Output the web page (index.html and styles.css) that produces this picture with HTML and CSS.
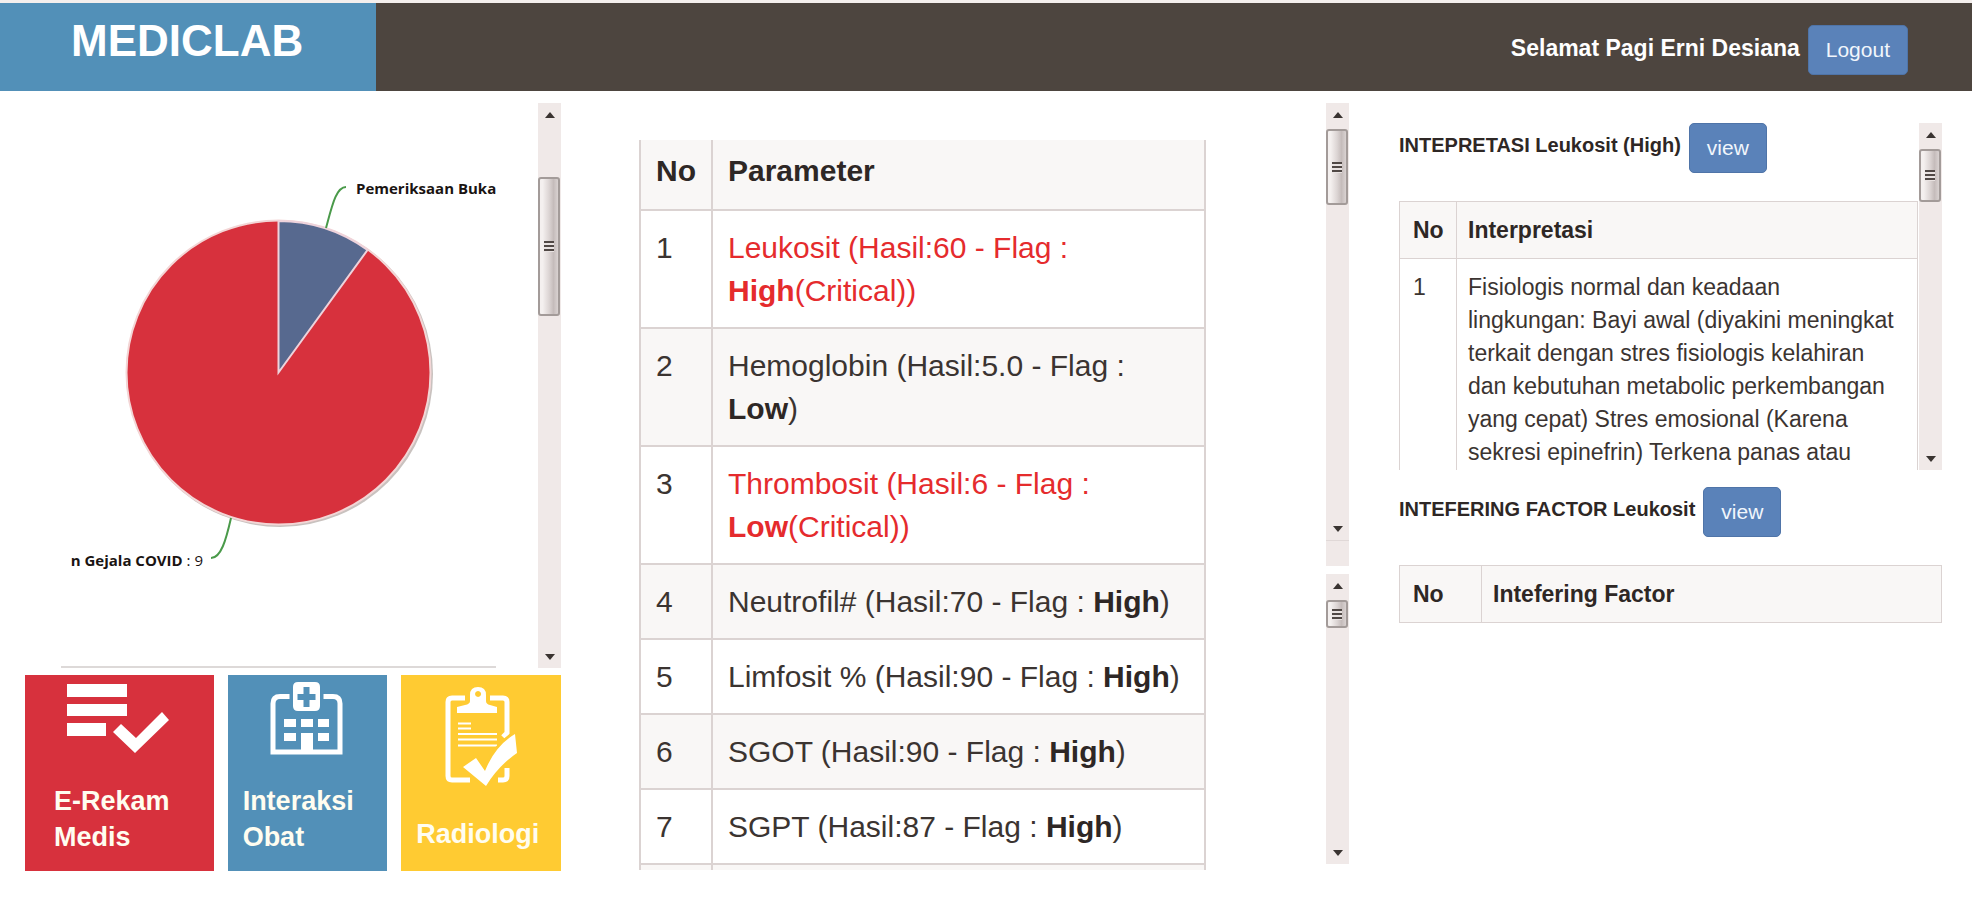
FILE: index.html
```
<!DOCTYPE html>
<html lang="id">
<head>
<meta charset="utf-8">
<title>MEDICLAB</title>
<link rel="stylesheet" href="styles.css">
</head>
<body>
<header class="topbar">
  <h1 class="brand">MEDICLAB</h1>
  <div class="account"><span>Selamat Pagi Erni Desiana</span><button class="btn" type="button">Logout</button></div>
</header>
<main class="page">
  <section class="col-left">
    <div class="chart-panel">
      <div class="chart-view">
        <svg class="chart" width="435" height="564" viewBox="61 103 435 564" role="img" aria-label="Pemeriksaan">
          <circle cx="280" cy="374" r="153" fill="#c9c2bf"/>
          <circle cx="278.500" cy="372.500" r="152" fill="#d7313d" stroke="#f3d6d6" stroke-width="2"/>
          <path d="M278.500 372.500V221A151.500 151.500 0 0 1 367.500 250Z" fill="#57698f" stroke="#eed3dc" stroke-width="2"/>
          <path d="M326 228C332 206 336 187 346 187" class="connector"/>
          <path d="M231 518C226 540 221 558 211 558" class="connector"/>
          <text x="356" y="194" class="chart-label">Pemeriksaan Buka</text>
          <text x="203" y="566" text-anchor="end" class="chart-label">n Gejala COVID<tspan class="chart-value"> : 9</tspan></text>
        </svg>
      </div>
      <div class="scrollbar">
        <svg class="arrow" viewBox="0 0 23 26"><path d="M7 15 12 9l5 6z"/></svg>
        <div class="thumb thumb-chart"><i></i></div>
        <svg class="arrow down" viewBox="0 0 23 26"><path d="M7 12h10l-5 6z"/></svg>
      </div>
    </div>
    <nav class="tiles">
      <a class="tile tile-red" href="#">
        <svg class="tile-icon" width="104" height="100" viewBox="68 680 104 100"><path d="M68 684h60v13H68zM68 704h60v12H68zM68 723h39v13H68zM114 732l8-8 15 14 26-26 7 8-34 33z"/></svg>
        <span>E-Rekam Medis</span>
      </a>
      <a class="tile tile-blue" href="#">
        <svg class="tile-icon" width="76" height="100" viewBox="270 680 76 100"><path d="M299 682h17q5 0 5 5v19q0 5-5 5h-17q-5 0-5-5v-19q0-5 5-5z"/><path d="M304.500 687h6v7h6v6h-6v7h-6v-7h-6v-6h6z" fill="#5290b8"/><path d="M290.500 696.500H281q-7 0-7 7V752h67v-48.500q0-7-7-7h-9.500" fill="none" stroke="#fff" stroke-width="5"/><path d="M285 719h12v8h-12zM302 719h12v8h-12zM319 719h11v8h-11zM285 733h12v8h-12zM319 733h11v8h-11zM302 733h12v19h-12z"/></svg>
        <span>Interaksi Obat</span>
      </a>
      <a class="tile tile-yellow" href="#">
        <svg class="tile-icon" width="76" height="108" viewBox="443 680 76 108"><path d="M465 698h-13q-4 0-4 4v74q0 4 4 4h18M490 698h13q4 0 4 4v31l-4 4M507 768v8q0 4-4 4h-5" fill="none" stroke="#fff" stroke-width="5"/><path fill-rule="evenodd" d="M470 701v-6q0-8 8-8t8 8v6q0 3 4 4l7 2v6h-40v-6l8-2q5-1 5-4zM478 691a3 3 0 1 0 .1 0z"/><path d="M458 723.500h13M458 728.500h13M458 734h39M458 739.500h39M458 745.500h39" stroke="#fff" stroke-width="2"/><path d="M463 767l13-9 9 13q10-25 30-37l2 19q-19 13-31 33z" stroke="#ffcb32" stroke-width="6" paint-order="stroke"/></svg>
        <span>Radiologi</span>
      </a>
    </nav>
  </section>
  <section class="col-mid">
    <div class="results">
      <table class="grid grid-large">
        <thead><tr><th class="num">No</th><th>Parameter</th></tr></thead>
        <tbody>
          <tr class="critical"><td>1</td><td>Leukosit (Hasil:60 - Flag :<br><b>High</b>(Critical))</td></tr>
          <tr><td>2</td><td>Hemoglobin (Hasil:5.0 - Flag :<br><b>Low</b>)</td></tr>
          <tr class="critical"><td>3</td><td>Thrombosit (Hasil:6 - Flag :<br><b>Low</b>(Critical))</td></tr>
          <tr><td>4</td><td>Neutrofil# (Hasil:70 - Flag : <b>High</b>)</td></tr>
          <tr><td>5</td><td>Limfosit % (Hasil:90 - Flag : <b>High</b>)</td></tr>
          <tr><td>6</td><td>SGOT (Hasil:90 - Flag : <b>High</b>)</td></tr>
          <tr><td>7</td><td>SGPT (Hasil:87 - Flag : <b>High</b>)</td></tr>
          <tr class="cut"><td></td><td></td></tr>
        </tbody>
      </table>
    </div>
    <div class="mid-bars">
      <div class="scrollbar bar-upper">
        <svg class="arrow" viewBox="0 0 23 26"><path d="M7 15 12 9l5 6z"/></svg>
        <div class="thumb thumb-upper"><i></i></div>
        <svg class="arrow down" viewBox="0 0 23 26"><path d="M7 12h10l-5 6z"/></svg>
        <div class="corner"></div>
      </div>
      <div class="scrollbar bar-lower">
        <svg class="arrow" viewBox="0 0 23 26"><path d="M7 15 12 9l5 6z"/></svg>
        <div class="thumb thumb-lower"><i></i></div>
        <svg class="arrow down" viewBox="0 0 23 26"><path d="M7 12h10l-5 6z"/></svg>
      </div>
    </div>
  </section>
  <section class="col-right">
    <div class="interp">
      <div class="interp-view">
        <div class="section-head"><h2>INTEPRETASI Leukosit (High)</h2><button class="btn" type="button">view</button></div>
        <table class="grid">
          <thead><tr><th class="num-narrow">No</th><th>Interpretasi</th></tr></thead>
          <tbody><tr><td>1</td><td>Fisiologis normal dan keadaan<br>lingkungan: Bayi awal (diyakini meningkat<br>terkait dengan stres fisiologis kelahiran<br>dan kebutuhan metabolic perkembangan<br>yang cepat) Stres emosional (Karena<br>sekresi epinefrin) Terkena panas atau</td></tr></tbody>
        </table>
      </div>
      <div class="scrollbar">
        <svg class="arrow" viewBox="0 0 23 26"><path d="M7 15 12 9l5 6z"/></svg>
        <div class="thumb thumb-interp"><i></i></div>
        <svg class="arrow down" viewBox="0 0 23 26"><path d="M7 12h10l-5 6z"/></svg>
      </div>
    </div>
    <div class="section-head"><h2>INTEFERING FACTOR Leukosit</h2><button class="btn" type="button">view</button></div>
    <table class="grid">
      <thead><tr><th class="num-wide">No</th><th>Intefering Factor</th></tr></thead>
    </table>
  </section>
</main>
</body>
</html>
```
FILE: styles.css
```
* { box-sizing: border-box; }
body {
  margin: 0;
  background: #fff;
  color: #3b3431;
  font: 23px/33px "Liberation Sans", Arial, sans-serif;
}
.topbar {
  display: flex;
  justify-content: space-between;
  height: 91px;
  border-top: 3px solid #f4efed;
  background: #4d453f;
  color: #fff;
}
.brand {
  width: 376px;
  margin: 0;
  padding: 13px 0 0 71px;
  background: #5290b8;
  font-size: 44px;
  line-height: 50px;
}
.account {
  display: flex;
  align-items: center;
  gap: 8px;
  padding: 6px 64px 0 0;
  font-weight: bold;
}
.account span { padding-bottom: 4px; }
.btn {
  height: 50px;
  padding: 0 17px;
  border: 1px solid #4f74a8;
  border-radius: 5px;
  background: #5a82b9;
  color: #f1f6fc;
  font: 21px/30px "Liberation Sans", Arial, sans-serif;
}
.page {
  display: flex;
  align-items: flex-start;
  padding: 12px 30px 26px 25px;
}
.col-left { flex: 536 1 0; min-width: 0; }
.col-mid { flex: 710 1 0; min-width: 0; display: flex; margin-left: 78px; }
.col-right { flex: 543 1 0; min-width: 0; margin-left: 50px; padding-top: 20px; }

.chart-panel { display: flex; justify-content: space-between; height: 565px; padding-left: 36px; }
.chart-view { width: 435px; border-bottom: 2px solid #ddd9d8; }
.chart { display: block; }
.connector { fill: none; stroke: #4a9a4a; stroke-width: 2; }
.chart-label { fill: #1a1412; font: bold 15px "Open Sans", sans-serif; }
.chart-value { font-weight: normal; }

.scrollbar {
  display: flex;
  flex-direction: column;
  flex: none;
  width: 23px;
  background: #f0e9e8;
}
.arrow { display: block; width: 23px; height: 26px; fill: #3a3431; }
.down { margin-top: auto; }
.thumb {
  display: flex;
  align-items: center;
  justify-content: center;
  width: 22px;
  border: 2px solid #a39b99;
  border-radius: 3px;
  background: linear-gradient(90deg, #f4f0ef 15%, #dcd5d4 50%, #c5bcbb 75%, #d9d2d1);
}
.thumb i { width: 10px; height: 11px; background: repeating-linear-gradient(#504845 0 2px, #e8e2e1 2px 4px); }
.thumb-chart { height: 139px; margin-top: 48px; }
.thumb-upper { height: 76px; }
.thumb-lower { height: 28px; }
.thumb-interp { height: 53px; }
.corner { height: 26px; border-top: 1px solid #e0d8d7; }

.tiles {
  display: grid;
  grid-template-columns: 189fr 160fr 160fr;
  gap: 14px;
  margin-top: 7px;
}
.tile {
  display: flex;
  flex-direction: column;
  justify-content: space-between;
  height: 196px;
  padding: 5px 15px 16px;
  color: #fffdf0;
  font-size: 27px;
  font-weight: bold;
  line-height: 36px;
  text-decoration: none;
}
.tile-red { padding-left: 29px; padding-right: 29px; background: #d7313d; }
.tile-blue { background: #5290b8; }
.tile-yellow { padding-bottom: 19px; background: #ffcb32; }
.tile-icon { align-self: center; fill: #fff; }

.results { flex: 1; min-width: 0; margin: 37px 120px 0 0; }
.mid-bars { display: flex; flex-direction: column; gap: 8px; }
.bar-upper { height: 463px; }
.bar-lower { height: 290px; }

.grid { width: 100%; border-collapse: collapse; }
.grid th, .grid td {
  padding: 12px 11px 11px;
  border: 1px solid #dbd3d2;
  text-align: left;
  vertical-align: top;
}
.grid th:first-child, .grid td:first-child { padding-left: 13px; }
.grid th { background: #f9f7f6; color: #2e2725; }
.grid b { color: #2e2725; }
.grid.grid-large { font-size: 30px; line-height: 43px; }
.grid.grid-large th, .grid.grid-large td { padding: 15px; border-width: 0 2px 2px; }
.grid.grid-large th { padding-top: 9px; padding-bottom: 17px; }
.grid-large tbody tr:nth-child(even) { background: #f9f7f6; }
.grid-large .critical td + td, .grid-large .critical b { color: #e52b2d; }
.grid.grid-large .cut td { height: 6px; padding: 0; border-bottom: 0; }
.num { width: 72px; }
.num-narrow { width: 57px; }
.num-wide { width: 82px; }

.interp { display: flex; height: 347px; margin-bottom: 17px; overflow: hidden; }
.interp-view { flex: 1; min-width: 0; margin-right: 1px; overflow: hidden; }
.section-head { display: flex; align-items: center; gap: 8px; margin-bottom: 28px; }
.section-head h2 { margin: 0; padding-bottom: 6px; color: #2e2725; font-size: 20px; line-height: 30px; }
```
